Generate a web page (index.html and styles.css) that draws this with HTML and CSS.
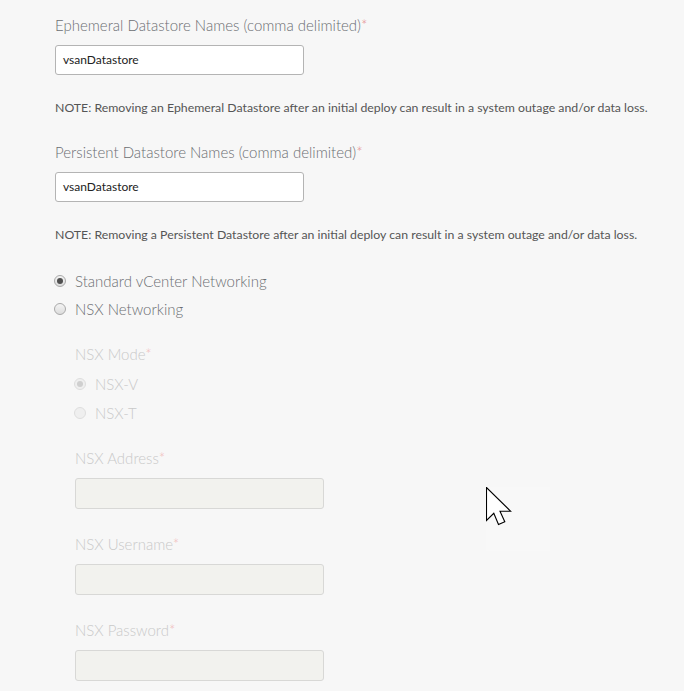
FILE: index.html
```html
<!DOCTYPE html>
<html>
<head>
<meta charset="utf-8">
<link rel="stylesheet" href="styles.css">
</head>
<body>
<div class="form">
  <div class="field">
    <div class="label">Ephemeral Datastore Names (comma delimited)<span class="req">*</span></div>
    <div class="input">vsanDatastore</div>
  </div>
  <p class="note">NOTE: Removing an Ephemeral Datastore after an initial deploy can result in a system outage and/or data loss.</p>

  <div class="field">
    <div class="label">Persistent Datastore Names (comma delimited)<span class="req">*</span></div>
    <div class="input">vsanDatastore</div>
  </div>
  <p class="note">NOTE: Removing a Persistent Datastore after an initial deploy can result in a system outage and/or data loss.</p>

  <div class="radios main">
    <div class="radio"><span class="dot checked"></span><span class="rlabel">Standard vCenter Networking</span></div>
    <div class="radio"><span class="dot"></span><span class="rlabel">NSX Networking</span></div>
  </div>

  <div class="sub">
    <div class="label dis">NSX Mode<span class="req">*</span></div>
    <div class="radios small">
      <div class="radio"><span class="dot checked dis"></span><span class="rlabel dis">NSX-V</span></div>
      <div class="radio"><span class="dot dis"></span><span class="rlabel dis">NSX-T</span></div>
    </div>

    <div class="field">
      <div class="label dis">NSX Address<span class="req">*</span></div>
      <div class="input disabled"></div>
    </div>
    <div class="field">
      <div class="label dis">NSX Username<span class="req">*</span></div>
      <div class="input disabled"></div>
    </div>
    <div class="field">
      <div class="label dis">NSX Password<span class="req">*</span></div>
      <div class="input disabled"></div>
    </div>
  </div>
</div>
<div class="cursor-area">
  <svg class="cursor" width="26" height="39" viewBox="0 0 26 39">
    <path d="M0.5 0.5 L0.5 33.5 L7.8 26.3 L12.5 37.5 L18.8 34.8 L14 24.2 L24.6 24.2 Z" fill="#fff" stroke="#000" stroke-width="1.1" stroke-linejoin="miter"/>
  </svg>
</div>
</body>
</html>
```
FILE: styles.css
```css
html, body {
  margin: 0;
  padding: 0;
  background: #f7f7f7;
}
body {
  font-family: Lato, "Liberation Sans", sans-serif;
  height: 691px;
  overflow: hidden;
  position: relative;
}
.form {
  padding: 15px 0 0 55px;
}
.field {
  display: flex;
  flex-direction: column;
  gap: 10px;
}
.label {
  font-size: 15px;
  font-weight: 300;
  line-height: 20px;
  color: #6b6e72;
}
.label.dis {
  color: #c9c9c9;
}
.req {
  color: #e58a8a;
}
.label.dis .req {
  color: #f0b8b8;
}
.input {
  box-sizing: border-box;
  width: 249px;
  height: 30px;
  background: #fff;
  border: 1px solid #b4b4b4;
  border-radius: 3px;
  padding: 0 7px;
  font-size: 12px;
  line-height: 28px;
  color: #222;
}
.input.disabled {
  height: 31px;
  background: #f2f2ee;
  border-color: #d8d8d6;
}
.note {
  margin: 25px 0 26px;
  font-size: 12.3px;
  line-height: 16px;
  color: #555;
}
.radios {
  display: flex;
  flex-direction: column;
  gap: 8px;
}
.radios.main {
  padding-top: 2px;
}
.radio {
  display: flex;
  align-items: center;
  height: 20px;
}
.dot {
  box-sizing: border-box;
  width: 12px;
  height: 12px;
  border-radius: 50%;
  border: 1px solid #a9a9a9;
  background: linear-gradient(#f4f4f4, #dcdcdc);
  margin-left: -1px;
  margin-right: 9px;
  position: relative;
}
.dot.checked::after {
  content: "";
  position: absolute;
  left: 2px;
  top: 2px;
  width: 6px;
  height: 6px;
  border-radius: 50%;
  background: #4f4f4f;
}
.dot.dis {
  border-color: #dedede;
  background: #efefef;
}
.dot.checked.dis::after {
  background: #cfcfcf;
}
.rlabel {
  font-size: 15px;
  font-weight: 300;
  color: #6b6e72;
}
.rlabel.dis {
  color: #c9c9c9;
}
.sub {
  padding: 25px 0 0 20px;
}
.sub .radios.small {
  gap: 9px;
  margin-top: 10px;
  margin-bottom: 25px;
}
.sub .field + .field {
  margin-top: 25px;
}
.cursor-area {
  position: absolute;
  left: 486px;
  top: 487px;
  width: 64px;
  height: 64px;
  background: #f8f8f8;
}
.cursor {
  display: block;
}
```
